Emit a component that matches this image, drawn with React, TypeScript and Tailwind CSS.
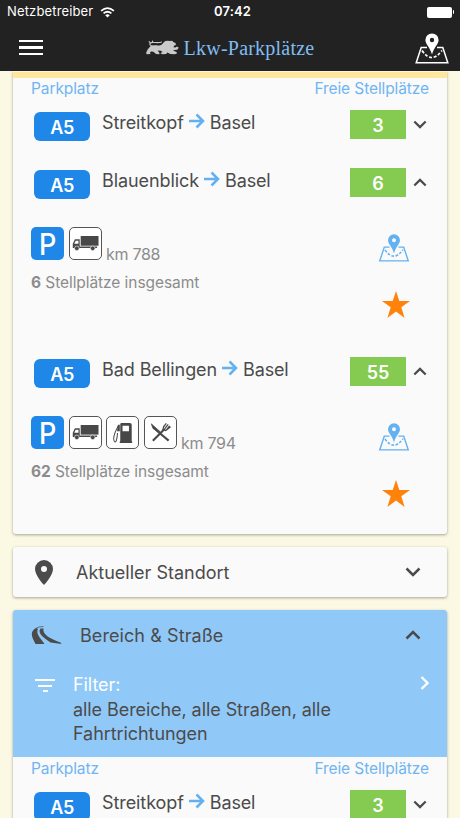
import { clsx } from "clsx";
import type { ReactNode } from "react";

type Lot = {
  name: string;
  direction: string;
  road: string;
  free: number;
  total?: number;
  km?: number;
  fuel?: boolean;
  food?: boolean;
};

const favourites: Lot[] = [
  { name: "Streitkopf", direction: "Basel", road: "A5", free: 3 },
  { name: "Blauenblick", direction: "Basel", road: "A5", free: 6, total: 6, km: 788 },
  {
    name: "Bad Bellingen",
    direction: "Basel",
    road: "A5",
    free: 55,
    total: 62,
    km: 794,
    fuel: true,
    food: true,
  },
];

const filtered: Lot[] = [{ name: "Streitkopf", direction: "Basel", road: "A5", free: 3 }];

function Chevron({ up, className }: { up?: boolean; className?: string }) {
  return (
    <svg viewBox="0 0 16 10" className={clsx(className, up && "rotate-180")}>
      <path d="M1.5 1.5 8 8l6.5-6.5" fill="none" stroke="currentColor" strokeWidth="2.5" />
    </svg>
  );
}

function MapIcon({ className }: { className: string }) {
  return (
    <svg viewBox="0 0 34 31" className={className} fill="none" stroke="currentColor">
      <path d="M12 14.6H6.2L1.2 29.8h31.6L27.8 14.6H22" strokeWidth="1.5" />
      <path d="M7 17.5q9.5 14 20 0" strokeWidth="1.7" strokeDasharray="3 1.8" />
      <path
        d="M17 .4a6.600 6.600 0 0 0-6.600 6.600c0 4.200 4.600 7.200 6.600 14.600 2-7.400 6.600-10.400 6.600-14.600A6.600 6.600 0 0 0 17 .4Zm0 4.400a2.200 2.200 0 1 1 0 4.400 2.200 2.200 0 0 1 0-4.400Z"
        fill="currentColor"
        fillRule="evenodd"
        stroke="none"
      />
    </svg>
  );
}

function Lion() {
  return (
    <svg viewBox="0 0 100 46" className="h-[15px] w-[33px] shrink-0 text-[#c9c9c9]" fill="currentColor">
      <path d="M12 20C22 13 36 19 46 15C52 12 52 7 59 3L66 2L73 3L80 2L83 6L90 9L91 15L85 18L84 22L90 23L94 20L100 24L95 30L86 31L83 33L92 36L95 41L88 44L74 43L65 38L61 43L50 44L43 41L50 37L45 33L35 32L41 40L40 44L30 43L22 36L15 35L11 39L14 43L1 44L0 38L5 28Z" />
      <path
        d="M20 19C11 17 9 13 13 9C21 4 32 12 48 6M13 9L8 4M20 7L19 2"
        fill="none"
        stroke="currentColor"
        strokeWidth="3.500"
      />
    </svg>
  );
}

function Header() {
  return (
    <header className="h-[71px] shrink-0 bg-[#222] text-white">
      <div className="grid h-6 grid-cols-3 items-center pr-1.5 pl-[7px] text-[13px]">
        <div className="flex items-center gap-[7px]">
          <span className="tracking-[0.15px]">Netzbetreiber</span>
          <svg viewBox="0 0 16 12" className="h-[11px] w-[15px]" fill="none" stroke="white">
            <path d="M1 4.200q7-6 14 0M3.700 7q4.300-3.600 8.600 0" strokeWidth="1.900" />
            <path d="m8 11.500-2.500-2.600q2.500-2 5 0Z" fill="white" stroke="none" />
          </svg>
        </div>
        <span className="pl-1 text-center font-semibold tracking-[0.1px]">07:42</span>
        <div className="flex items-center justify-end gap-px">
          <div className="h-[11px] w-[25px] rounded-[2px] bg-white" />
          <div className="h-1 w-[1.500px] rounded-r bg-white" />
        </div>
      </div>
      <div className="flex h-[47px] items-center justify-between pr-[11px] pl-[19px]">
        <div className="flex w-6 flex-col gap-1">
          <div className="h-[2.500px] w-6 bg-white" />
          <div className="h-[2.500px] w-6 bg-white" />
          <div className="h-[2.500px] w-6 bg-white" />
        </div>
        <div className="flex items-center gap-[5px] pl-0.5">
          <Lion />
          <h1 className="font-['Liberation_Serif',serif] text-[20px] leading-6 tracking-[0.22px] whitespace-nowrap text-[#80bdf2]">
            Lkw-Parkplätze
          </h1>
        </div>
        <MapIcon className="mt-0.5 h-[31px] w-[34px]" />
      </div>
    </header>
  );
}

function Sign({ children }: { children: ReactNode }) {
  return (
    <div className="flex h-[33px] w-[33px] items-center justify-center rounded-[5px] border border-[#555] bg-white text-[#484848]">
      {children}
    </div>
  );
}

function LotDetails({ lot }: { lot: Lot }) {
  return (
    <div className="flex h-[131px] justify-between pt-[13px] pr-[37px] pl-[18px] text-[#8c8c8c]">
      <div>
        <div className="flex items-end gap-[4.500px]">
          <div className="flex h-[33px] w-[33px] items-center justify-center rounded-[5px] bg-[#1f87e8] text-[30px] leading-none text-white">
            <span className="scale-x-90 font-medium">P</span>
          </div>
          <Sign>
            <svg viewBox="0 0 28 16" className="w-[27px]" fill="currentColor">
              <path d="M9 0h18.500v10H9Z" />
              <path d="M8 3.500H3L.8 8v4.500H26V11H8Zm-1.300 1.300V8H2.300l1.500-3.200Z" fillRule="evenodd" />
              <circle cx="5" cy="12.800" r="2.400" stroke="white" strokeWidth=".6" />
              <circle cx="21.500" cy="12.800" r="2.400" stroke="white" strokeWidth=".6" />
            </svg>
          </Sign>
          {lot.fuel && (
            <Sign>
              <svg viewBox="0 0 24 26" className="h-6 w-[22px]" fill="currentColor">
                <path
                  d="M10.500 2h9a2 2 0 0 1 2 2v18h.5v2H8.500v-2h.5V3.500A1.500 1.500 0 0 1 10.500 2Zm1 3v6h7V5Z"
                  fillRule="evenodd"
                />
                <path
                  d="M7 5C3 12 1 19 2.500 22c2 2.500 3-2 3.500-9"
                  fill="none"
                  stroke="currentColor"
                  strokeWidth="1.100"
                />
                <path d="M6.500 4h2v7H5.500Z" />
              </svg>
            </Sign>
          )}
          {lot.food && (
            <Sign>
              <svg viewBox="0 0 24 24" className="w-[23px]" fill="none" stroke="currentColor">
                <path d="M11 12.500 20.500 20.500M16.500 8 4 20.500" strokeWidth="2.200" />
                <path d="M2.500 3 12 11.500l-1.500 1.500L4 7.500Z" fill="currentColor" strokeWidth=".8" />
                <path d="m15.500 5-1 4 3 1 5-4M15 6.500l3-4M16.500 8l3.500-4.500M18 9.500 21.500 5" strokeWidth="1.300" />
              </svg>
            </Sign>
          )}
          <span className="-mb-0.5 text-[16px] leading-none tracking-[-0.3px]">km {lot.km}</span>
        </div>
        <p className="mt-[13px] text-[15.500px] leading-5 tracking-[-0.07px]">
          <b>{lot.total}</b> Stellplätze insgesamt
        </p>
      </div>
      <div className="flex flex-col items-center pt-[7px]">
        <MapIcon className="h-[28px] w-8 text-[#64b1f2]" />
        <svg viewBox="0 0 28 27" className="mt-[29px] ml-1 h-[27px] w-7 fill-[#ff820a]">
          <path d="m14 0 3.300 10H28l-8.700 6.200L22.600 27 14 20.500 5.400 27l3.300-10.800L0 10h10.700Z" />
        </svg>
      </div>
    </div>
  );
}

function LotRow({ lot }: { lot: Lot }) {
  const open = lot.total !== undefined;
  return (
    <>
      <div className="flex h-[58px] pt-3 pr-5 pl-[21px]">
        <div className="mt-0.5 flex h-[29px] w-14 items-center justify-center rounded-md bg-[#1f87e8] pt-0.5 text-[18px] font-semibold tracking-[-0.4px] text-white">
          {lot.road}
        </div>
        <div className="ml-3 flex h-[25px] flex-1 items-center text-[18px]">
          <span className="tracking-[-0.08px]">{lot.name}</span>
          <svg viewBox="0 0 16 16" className="mx-[5px] mb-[3px] w-4" fill="none" stroke="#64b1f2">
            <path d="M0 8h14M7.500 1.500 14 8l-6.500 6.500" strokeWidth="2.500" />
          </svg>
          <span className="tracking-[-0.15px]">{lot.direction}</span>
        </div>
        <div className="flex h-[29px] w-14 items-center justify-center bg-[#85cb52] pt-px text-[18px] font-semibold text-white">
          {lot.free}
        </div>
        <Chevron up={open} className="mt-2.5 ml-[7px] h-[9px] w-3.5" />
      </div>
      {open && <LotDetails lot={lot} />}
    </>
  );
}

function LotList({ lots }: { lots: Lot[] }) {
  return (
    <div>
      <div className="flex h-5 items-center justify-between px-[18px] pt-0.5 text-[15.500px] tracking-[-0.1px] text-[#70b5f3]">
        <span>Parkplatz</span>
        <span>Freie Stellplätze</span>
      </div>
      {lots.map((lot) => (
        <LotRow key={lot.name} lot={lot} />
      ))}
    </div>
  );
}

function Card({ children, className }: { children: ReactNode; className?: string }) {
  return (
    <section
      className={clsx(
        "shrink-0 overflow-hidden rounded-[3px] bg-[#fafafa] shadow-[0_1px_3px_rgba(0,0,0,0.35)]",
        className,
      )}
    >
      {children}
    </section>
  );
}

export default function App() {
  return (
    <div className="flex h-[818px] w-[460px] flex-col overflow-hidden bg-[#fbf9e3] font-[Inter,sans-serif] text-[#4b4b4b]">
      <Header />
      <main className="flex min-h-0 flex-1 flex-col gap-[13px] overflow-hidden px-[13px]">
        <Card className="h-[463px] rounded-t-none">
          <div className="h-[7px] border-t border-[#fff5d5] bg-[#ffe79f]" />
          <LotList lots={favourites} />
        </Card>

        <Card className="flex h-[50px] items-center pr-[26px] pl-[22px]">
          <svg viewBox="0 0 18 25" className="h-[25px] w-[18px]" fill="currentColor">
            <path
              d="M9 0a9 9 0 0 0-9 9c0 6.500 9 16 9 16s9-9.500 9-16a9 9 0 0 0-9-9Zm0 6a3 3 0 1 1 0 6 3 3 0 0 1 0-6Z"
              fillRule="evenodd"
            />
          </svg>
          <span className="ml-[23px] flex-1 text-[18px]">Aktueller Standort</span>
          <Chevron className="h-2.5 w-4" />
        </Card>

        <Card className="h-[260px]">
          <div className="h-[147px] bg-[#90c9f8]">
            <div className="flex h-[50px] items-center pr-[26px] pl-[18px]">
              <svg viewBox="0 0 30 18" className="h-[18px] w-[31px]" fill="currentColor">
                <path d="M5 2C0 4-1 8 2 14l2 4h9C9 12 4 8 6.500 3Z" />
                <path d="M9 2.500c-3 4 1 8 10 14L30 18l-1-1.500C20 13 10.500 9 12 2.500Z" />
                <path d="M4 2.500Q7 .5 12 .5" fill="none" stroke="currentColor" strokeWidth=".7" />
              </svg>
              <span className="ml-[18px] flex-1 text-[18px] tracking-[0.08px]">Bereich &amp; Straße</span>
              <Chevron up className="h-2.5 w-4" />
            </div>
            <div className="flex pt-[13px] pr-[18px] pl-[22px]">
              <div className="mt-1.5 flex w-5 flex-col items-center gap-[3.500px]">
                <div className="h-[2px] w-5 bg-white" />
                <div className="h-[2px] w-3.5 bg-white" />
                <div className="h-[2px] w-[5px] bg-white" />
              </div>
              <p className="ml-[18px] flex-1 text-[18px] leading-[24.500px] tracking-[-0.07px] whitespace-nowrap">
                <span className="text-white">Filter:</span>
                <br />
                alle Bereiche, alle Straßen, alle
                <br />
                Fahrtrichtungen
              </p>
              <svg viewBox="0 0 9 14" className="mt-[3px] h-3.5 w-[9px]" fill="none" stroke="white">
                <path d="m1.500 1 6 6-6 6" strokeWidth="2.300" />
              </svg>
            </div>
          </div>
          <div className="pt-px">
            <LotList lots={filtered} />
          </div>
        </Card>
      </main>
    </div>
  );
}
